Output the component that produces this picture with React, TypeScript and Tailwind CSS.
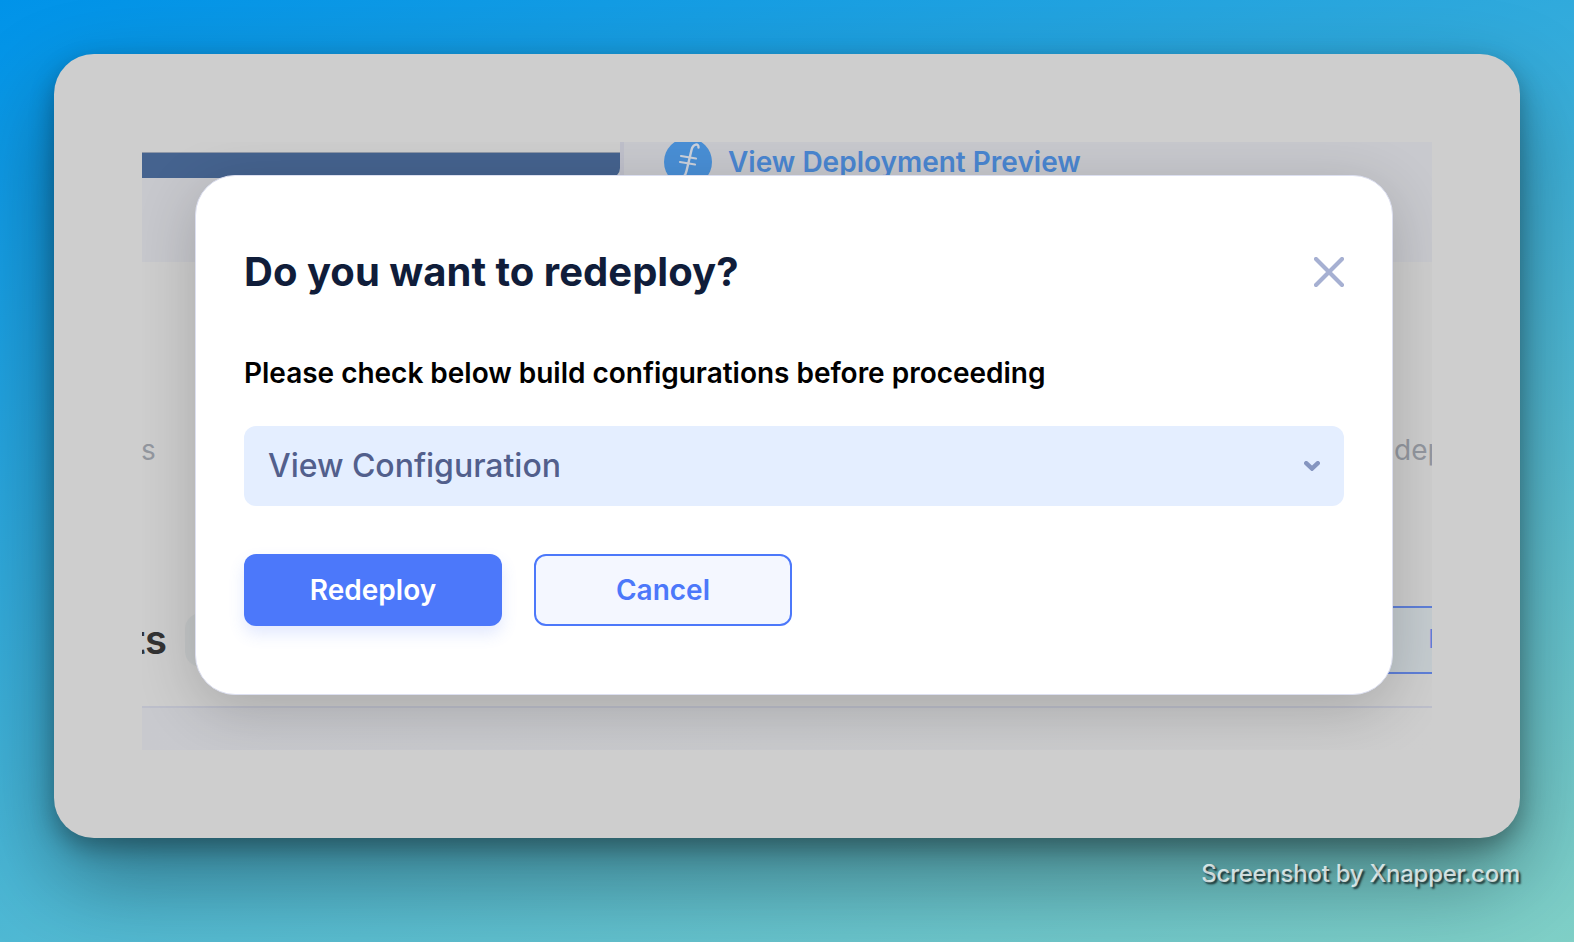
function FilecoinIcon() {
  return (
    <svg className="size-12 shrink-0" viewBox="0 0 48 48" fill="none">
      <circle cx="24" cy="24" r="24" fill="#498fd6" />
      <path d="M34.500 9.500C35 5 29 5.500 27.500 12L22.500 33C21.500 38 18 41 14.500 40" stroke="#cdd2dc" strokeWidth="2.400" strokeLinecap="round" />
      <path d="M17 18L32 20.500M16 24L31 26.500" stroke="#cdd2dc" strokeWidth="2.200" strokeLinecap="round" />
    </svg>
  );
}

function PageBehind() {
  return (
    <div className="col-start-1 row-start-1 flex h-[608px] w-[1290px] flex-col overflow-hidden">
      <div className="flex h-[120px] shrink-0">
        <div className="flex w-[478px] flex-col bg-[#c7c8cd]">
          <div className="h-[10px] bg-[#cecece]" />
          <div className="h-[26px] rounded-br-[10px] border-t border-[#8f98a8] bg-[#45638f]" />
        </div>
        <div className="flex flex-1 items-start border-l-4 border-[#bfc0cb] bg-[#c8c9ce] pl-[40px]">
          <div className="-mt-1 flex items-center gap-4">
            <FilecoinIcon />
            <span className="text-[28px] font-semibold leading-10 text-[#4a86d1]">View Deployment Preview</span>
          </div>
        </div>
      </div>
      <div className="flex h-[203px] shrink-0 items-end justify-between text-[28px] leading-[30px] text-[#93979f]">
        <span className="-ml-[1px]">s</span>
        <span className="w-[38px] whitespace-nowrap">dep</span>
      </div>
      <div className="mt-[141px] flex h-[68px] shrink-0 justify-between">
        <div className="flex items-center gap-[18px]">
          <div className="flex w-[25px] justify-end text-[40px] font-semibold leading-none text-[#333333]">ts</div>
          <div className="h-[54px] w-20 rounded-2xl bg-[#c5c8c9]" />
        </div>
        <div className="flex w-[80px] items-center overflow-hidden border-y-2 border-[#5f7fd8] bg-[#c5ccd0] pl-[76.500px] text-[25px] font-semibold text-[#5f7fd8]">
          D
        </div>
      </div>
      <div className="mt-8 h-[44px] shrink-0 border-t-2 border-[#bdbfcb] bg-linear-to-r from-[#c8c9ce] via-[#cacbce] to-[#cecece]" />
    </div>
  );
}

function RedeployDialog() {
  return (
    <div className="z-10 col-start-1 row-start-1 ml-[53px] mt-[33px] flex h-[520px] w-[1198px] flex-col rounded-[40px] border border-[#dcdff0] bg-white px-12 shadow-[0_14px_60px_rgba(0,0,0,0.19)]">
      <div className="mt-[72px] flex h-12 items-center justify-between">
        <h1 className="text-[40px] font-bold leading-[48px] tracking-[0.02px] text-[#101d3a]">Do you want to redeploy?</h1>
        <svg className="size-[30px]" viewBox="0 0 30 30" fill="none" stroke="#a6b0d2" strokeWidth="4.200" strokeLinecap="round">
          <path d="M2 2L28 28M28 2L2 28" />
        </svg>
      </div>
      <p className="mt-[60px] text-[28px] font-semibold leading-[34px] tracking-[-0.02px] text-black">
        Please check below build configurations before proceeding
      </p>
      <div className="mt-[36px] flex h-20 items-center justify-between rounded-xl bg-[#e4eeff] px-6">
        <span className="text-[32px] font-medium tracking-[-0.03px] text-[#525f8c]">View Configuration</span>
        <svg className="h-[10px] w-4" viewBox="0 0 16 10" fill="none" stroke="#8595c0" strokeWidth="4.400" strokeLinecap="round">
          <path d="M2.200 2.200L8 7.600L13.800 2.200" />
        </svg>
      </div>
      <div className="mt-12 flex gap-8 text-[28px] font-semibold">
        <button className="h-[72px] w-[258px] rounded-xl bg-[#4c78fa] text-white shadow-[0_8px_16px_rgba(76,120,250,0.16)]">Redeploy</button>
        <button className="h-[72px] w-[258px] rounded-xl border-2 border-[#4c78fa] bg-[#f4f7ff] text-[#4c78fa]">Cancel</button>
      </div>
    </div>
  );
}

export default function App() {
  return (
    <div className="flex h-[942px] w-[1574px] flex-col overflow-hidden bg-[linear-gradient(160deg,#0093e9_0%,#80d0c7_100%)] px-[54px] pt-[54px] font-['Inter',sans-serif]">
      <div className="h-[784px] rounded-[40px] bg-[#cecece] p-[88px] shadow-[0_40px_90px_rgba(0,0,0,0.38),0_10px_24px_rgba(0,0,0,0.3)]">
        <div className="grid h-[608px] w-[1290px] overflow-hidden">
          <PageBehind />
          <RedeployDialog />
        </div>
      </div>
      <div className="mt-5 text-right text-[24px] font-medium leading-8 tracking-[-0.26px] text-white/75 [text-shadow:2px_2px_2px_rgba(0,0,0,0.7)]">
        Screenshot by Xnapper.com
      </div>
    </div>
  );
}
